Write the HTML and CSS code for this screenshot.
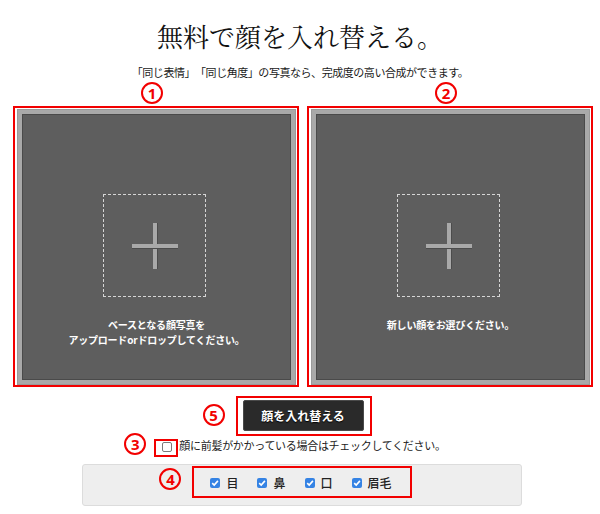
FILE: index.html
```html
<!DOCTYPE html>
<html lang="ja">
<head>
<meta charset="utf-8">
<title>無料で顔を入れ替える。</title>
<link rel="stylesheet" href="styles.css">
</head>
<body>
<main class="page">
  <h1 class="title">無料で顔を入れ替える。</h1>
  <p class="lead">「同じ表情」「同じ角度」の写真なら、完成度の高い合成ができます。</p>

  <div class="uploads">
    <section class="slot">
      <span class="num num-top">1</span>
      <div class="mark mark-panel">
        <div class="panel">
          <div class="drop">
            <svg class="plus" width="46" height="46" viewBox="0 0 46 46" aria-hidden="true">
              <rect x="0" y="21" width="46" height="4" fill="#a9a9a9"/>
              <rect x="21" y="0" width="4" height="46" fill="#a9a9a9"/>
              <rect x="0" y="25" width="46" height="1" fill="#4c4c4c"/>
              <rect x="25" y="0" width="1" height="21" fill="#4c4c4c"/>
              <rect x="25" y="26" width="1" height="20" fill="#4c4c4c"/>
            </svg>
          </div>
          <p class="hint">ベースとなる顔写真を<br>アップロードorドロップしてください。</p>
        </div>
      </div>
    </section>
    <section class="slot">
      <span class="num num-top">2</span>
      <div class="mark mark-panel">
        <div class="panel">
          <div class="drop">
            <svg class="plus" width="46" height="46" viewBox="0 0 46 46" aria-hidden="true">
              <rect x="0" y="21" width="46" height="4" fill="#a9a9a9"/>
              <rect x="21" y="0" width="4" height="46" fill="#a9a9a9"/>
              <rect x="0" y="25" width="46" height="1" fill="#4c4c4c"/>
              <rect x="25" y="0" width="1" height="21" fill="#4c4c4c"/>
              <rect x="25" y="26" width="1" height="20" fill="#4c4c4c"/>
            </svg>
          </div>
          <p class="hint">新しい顔をお選びください。</p>
        </div>
      </div>
    </section>
  </div>

  <div class="action">
    <div class="mark mark-btn">
      <span class="num num-5">5</span>
      <button class="swap" type="button">顔を入れ替える</button>
    </div>
  </div>

  <div class="bangs">
    <span class="mark mark-cb">
      <span class="num num-3">3</span>
      <span class="cb"></span>
    </span>
    <span class="bangs-text">顔に前髪がかかっている場合はチェックしてください。</span>
  </div>

  <div class="parts">
    <div class="mark mark-parts">
      <span class="num num-4">4</span>
      <span class="part"><span class="cb cb-on"><svg width="10" height="10" viewBox="0 0 10 10" aria-hidden="true"><path d="M2.2 5.2 L4.2 7.1 L7.9 2.9" fill="none" stroke="#fff" stroke-width="1.6"/></svg></span><span class="part-label">目</span></span>
      <span class="part"><span class="cb cb-on"><svg width="10" height="10" viewBox="0 0 10 10" aria-hidden="true"><path d="M2.2 5.2 L4.2 7.1 L7.9 2.9" fill="none" stroke="#fff" stroke-width="1.6"/></svg></span><span class="part-label">鼻</span></span>
      <span class="part"><span class="cb cb-on"><svg width="10" height="10" viewBox="0 0 10 10" aria-hidden="true"><path d="M2.2 5.2 L4.2 7.1 L7.9 2.9" fill="none" stroke="#fff" stroke-width="1.6"/></svg></span><span class="part-label">口</span></span>
      <span class="part"><span class="cb cb-on"><svg width="10" height="10" viewBox="0 0 10 10" aria-hidden="true"><path d="M2.2 5.2 L4.2 7.1 L7.9 2.9" fill="none" stroke="#fff" stroke-width="1.6"/></svg></span><span class="part-label">眉毛</span></span>
    </div>
  </div>
</main>
</body>
</html>
```

FILE: styles.css
```css
* {
  box-sizing: border-box;
}

html, body {
  margin: 0;
  padding: 0;
  background: #ffffff;
}

body {
  font-family: "Noto Sans CJK JP", "Noto Sans", sans-serif;
  color: #222222;
}

.page {
  width: 600px;
  display: flex;
  flex-direction: column;
}

.title {
  margin: 0;
  padding-top: 22px;
  font-family: "Noto Serif CJK JP", "Noto Sans CJK JP", serif;
  font-weight: 400;
  font-size: 26px;
  line-height: 28px;
  color: #111111;
  text-align: center;
}

.lead {
  margin: 15px 0 0;
  font-size: 11px;
  line-height: 14px;
  text-align: center;
  color: #1a1a1a;
  letter-spacing: -0.45px;
  text-spacing-trim: space-all;
}

/* annotation marks */
.mark {
  border: 2px solid #f20000;
  position: relative;
}

.num {
  display: flex;
  align-items: center;
  justify-content: center;
  width: 22px;
  height: 22px;
  border: 2px solid #f20000;
  border-radius: 50%;
  color: #f20000;
  font-family: "Noto Sans", "Liberation Sans", sans-serif;
  font-weight: 700;
  font-size: 15px;
  line-height: 1;
}

.num-5, .num-3, .num-4 {
  position: absolute;
}

/* uploads */
.uploads {
  display: flex;
  gap: 8px;
  padding-left: 13px;
  margin-top: 3px;
}

.slot {
  width: 286px;
  display: flex;
  flex-direction: column;
  align-items: center;
}

.num-top {
  margin: 0 8px 2px 0;
}

.mark-panel {
  width: 286px;
  height: 281px;
  padding: 2px 2px 1px 3px;
  display: flex;
}

.panel {
  flex: 1;
  background: #5e5e5e;
  border: 4px solid #a9a9a9;
  box-shadow: inset 0 0 0 1px #4a4a4a, 0 0 0 1px #9a9a9a;
  display: flex;
  flex-direction: column;
  align-items: center;
  padding-top: 80px;
}

.drop {
  width: 103px;
  height: 103px;
  border: 1px dashed #d6d6d6;
  display: flex;
  align-items: center;
  justify-content: center;
  margin-right: 4px;
}

.hint {
  margin: 20px 0 0;
  color: #ffffff;
  font-weight: 700;
  font-size: 10px;
  line-height: 15px;
  text-align: center;
  letter-spacing: -0.2px;
}

/* swap button */
.action {
  margin-top: 9px;
  display: flex;
  justify-content: center;
  padding-left: 7px;
}

.mark-btn {
  padding: 2px 6px 3px 5px;
}

.num-5 {
  left: -35px;
  top: 6px;
}

.swap {
  display: block;
  width: 121px;
  height: 31px;
  margin: 0;
  padding: 0;
  background: #2a2a2a;
  border: 1px solid #4a4a4a;
  border-radius: 2px;
  color: #ffffff;
  font-family: "Noto Sans CJK JP", sans-serif;
  font-weight: 700;
  font-size: 12px;
  text-shadow: 0 1px 1px #000000;
}

/* bangs checkbox row */
.bangs {
  margin-top: 2px;
  display: flex;
  justify-content: center;
  align-items: flex-start;
  gap: 1px;
  font-size: 11px;
  line-height: 14px;
  color: #222222;
}

.mark-cb {
  margin-top: 1px;
  width: 24px;
  height: 18px;
  padding: 1px 0 0 6px;
  display: flex;
  align-items: flex-start;
}

.num-3 {
  left: -32px;
  top: -8px;
}

.cb {
  display: flex;
  width: 10px;
  height: 10px;
  border: 1px solid #7a7a7a;
  border-radius: 2px;
  background: #ffffff;
}

.bangs-text {
  letter-spacing: -0.3px;
}

/* face parts */
.parts {
  margin: 7px 0 0 82px;
  width: 440px;
  height: 42px;
  background: #eeeeee;
  border: 1px solid #dcdcdc;
  border-radius: 3px;
  display: flex;
  justify-content: center;
  align-items: flex-start;
  padding-top: 1px;
}

.mark-parts {
  height: 32px;
  padding: 1px 18px 0 16px;
  display: flex;
  align-items: center;
  gap: 19px;
}

.num-4 {
  left: -35px;
  top: 0;
}

.part {
  display: flex;
  align-items: center;
  gap: 6px;
}

.cb-on {
  border: none;
  background: #3583e4;
}

.part-label {
  font-size: 12px;
  line-height: 14px;
  font-weight: 500;
  color: #222222;
}
```
